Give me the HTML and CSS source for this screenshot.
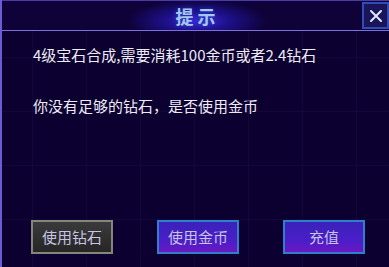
FILE: index.html
```html
<!DOCTYPE html>
<html lang="zh-CN">
<head>
    <meta charset="UTF-8">
    <title>提示</title>
    <link rel="stylesheet" href="styles.css">
</head>
<body>
<div class="dialog">
    <div class="title">
        <span class="title-text">提示</span>
        <span class="close">
            <svg width="16" height="16" viewBox="0 0 16 16">
                <path d="M3 3 L13 13 M13 3 L3 13" stroke="#dfe8ff" stroke-width="2" stroke-linecap="round"/>
            </svg>
        </span>
    </div>
    <div class="content">
        <p class="line">4级宝石合成,需要消耗100金币或者2.4钻石</p>
        <p class="line second">你没有足够的钻石，是否使用金币</p>
    </div>
    <div class="buttons">
        <span class="btn grey">使用钻石</span>
        <span class="btn purple">使用金币</span>
        <span class="btn purple">充值</span>
    </div>
</div>
</body>
</html>
```

FILE: styles.css
```css
*{padding:0;margin:0;}
body{
    background-color: #0c0030;
    font-family: "Noto Sans CJK SC", "Noto Sans", sans-serif;
}
.dialog{
    width: 387px;
    height: 267px;
    border-left: 2px solid #6a5cd2;
    background-color: #0c0030;
    background-image:
        linear-gradient(rgba(60,30,110,0.18) 1px, transparent 1px),
        linear-gradient(90deg, rgba(60,30,110,0.18) 1px, transparent 1px);
    background-size: 54px 54px;
    background-position: 30px 3px;
    display: flex;
    flex-direction: column;
}
.title{
    position: relative;
    height: 29px;
    border-top: 1px solid #4a3ca8;
    border-bottom: 1px solid #7d6fe0;
    background: radial-gradient(ellipse 70px 22px at 195px 20px, #3a28d8 0%, #1e108a 45%, #0e0238 100%);
    display: flex;
    justify-content: center;
    align-items: center;
}
.title-text{
    font-size: 18px;
    font-weight: bold;
    letter-spacing: 4px;
    margin-left: 4px;
    color: #a9c4f2;
    text-shadow: 0 0 4px #2040c0;
}
.close{
    position: absolute;
    right: 0;
    top: 1px;
    width: 23px;
    height: 23px;
    border: 2px solid #2f4cb8;
    background-color: #1a1458;
    display: flex;
    justify-content: center;
    align-items: center;
}
.content{
    padding: 13px 0 0 31px;
    height: 176px;
    color: #ecebf5;
    font-size: 15px;
}
.line{
    line-height: 22px;
}
.second{
    margin-top: 29px;
}
.buttons{
    display: flex;
    padding-left: 29px;
    gap: 44px;
}
.btn{
    width: 78px;
    height: 30px;
    line-height: 30px;
    text-align: center;
    font-size: 15px;
    color: #c6c4e4;
}
.grey{
    border: 2px solid #85857a;
    background: linear-gradient(#3a3a3a, #262626);
}
.purple{
    border: 2px solid #2f7fcf;
    background: linear-gradient(#3a22b8, #4a1ec8 60%, #6a18c0);
}
```
